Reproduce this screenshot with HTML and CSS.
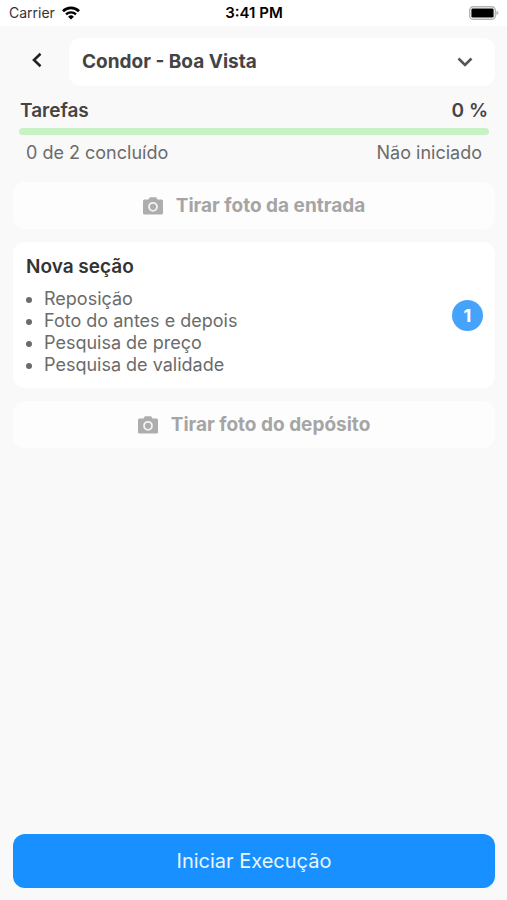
FILE: index.html
```html
<!DOCTYPE html>
<html lang="pt-BR">
<head>
  <meta charset="utf-8">
  <meta name="viewport" content="width=device-width, initial-scale=1">
  <title>Tarefas</title>
  <link rel="stylesheet" href="styles.css">
</head>
<body>
  <div class="status-bar">
    <div class="carrier">
      <span>Carrier</span>
      <svg class="wifi" viewBox="0 0 18 14" aria-hidden="true">
        <path d="M1 5.2a11.4 11.4 0 0 1 16 0" fill="none" stroke="currentColor" stroke-width="2.7"/>
        <path d="M4 8.4a7.2 7.2 0 0 1 10 0" fill="none" stroke="currentColor" stroke-width="2.3"/>
        <path d="M9 13.6 6.1 10.7a4.1 4.1 0 0 1 5.8 0z" fill="currentColor"/>
      </svg>
    </div>
    <time class="clock">3:41 PM</time>
    <svg class="battery" viewBox="0 0 30 14" aria-hidden="true">
      <rect x="0.7" y="0.7" width="25.6" height="12.6" rx="3.6" fill="#fff" stroke="#b4b4b4" stroke-width="1.4"/>
      <rect x="2.4" y="2.4" width="22.2" height="9.2" rx="1.4" fill="#000"/>
      <path d="M27.4 4.8c1.2.4 2 1.2 2 2.2s-.8 1.8-2 2.2z" fill="#b4b4b4"/>
    </svg>
  </div>

  <header class="top">
    <button class="back" type="button" aria-label="Voltar">
      <svg viewBox="0 0 10 16" aria-hidden="true"><path d="M8.5 1.8 2 8l6.5 6.2" fill="none" stroke="currentColor" stroke-width="2.6"/></svg>
    </button>
    <div class="store">
      <select class="store-select" aria-label="Loja">
        <option>Condor - Boa Vista</option>
      </select>
      <svg class="chevron" viewBox="0 0 16 10" aria-hidden="true"><path d="M1.5 1.5 8 8l6.5-6.5" fill="none" stroke="currentColor" stroke-width="2.6"/></svg>
    </div>
  </header>

  <main class="content">
    <section class="progress">
      <div class="progress-head">
        <h1>Tarefas</h1>
        <strong>0 %</strong>
      </div>
      <div class="track" role="progressbar" aria-label="Tarefas" aria-valuemin="0" aria-valuemax="100" aria-valuenow="0"></div>
      <div class="progress-foot">
        <span>0 de 2 concluído</span>
        <span>Não iniciado</span>
      </div>
    </section>

    <button class="photo" type="button">
      <svg class="camera" viewBox="0 0 20 18" aria-hidden="true">
        <path fill="currentColor" d="M1.5 2.5h4l.8-1.6q.3-.6 1-.6h5.4q.7 0 1 .6l.8 1.6h4q1.5 0 1.5 1.500V16q0 1.500-1.500 1.500h-17Q0 17.500 0 16V4q0-1.500 1.500-1.500z"/>
        <circle cx="10" cy="9.800" r="4" fill="none" stroke="#f4f4f4" stroke-width="1.800"/>
      </svg>
      <span>Tirar foto da entrada</span>
    </button>

    <section class="card">
      <div>
        <h2>Nova seção</h2>
        <ul class="tasks">
          <li>Reposição</li>
          <li>Foto do antes e depois</li>
          <li>Pesquisa de preço</li>
          <li>Pesquisa de validade</li>
        </ul>
      </div>
      <span class="badge">1</span>
    </section>

    <button class="photo" type="button">
      <svg class="camera" viewBox="0 0 20 18" aria-hidden="true">
        <path fill="currentColor" d="M1.5 2.5h4l.8-1.6q.3-.6 1-.6h5.4q.7 0 1 .6l.8 1.6h4q1.5 0 1.5 1.500V16q0 1.500-1.500 1.500h-17Q0 17.500 0 16V4q0-1.500 1.500-1.500z"/>
        <circle cx="10" cy="9.800" r="4" fill="none" stroke="#f4f4f4" stroke-width="1.800"/>
      </svg>
      <span>Tirar foto do depósito</span>
    </button>
  </main>

  <footer class="actions">
    <button class="start" type="button">Iniciar Execução</button>
  </footer>
</body>
</html>
```
FILE: styles.css
```css
* {
  box-sizing: border-box;
}

body {
  display: flex;
  flex-direction: column;
  min-height: 100vh;
  margin: 0;
  background: #f9f9f9;
  color: #6b6b6b;
  font-family: Inter, "Liberation Sans", sans-serif;
  font-size: 18px;
  line-height: 22px;
}

button,
select {
  margin: 0;
  padding: 0;
  border: 0;
  background: none;
  font: inherit;
}

svg {
  display: block;
  flex: none;
}

h1,
h2 {
  margin: 0;
  font-weight: 600;
}

.status-bar {
  display: grid;
  grid-template-columns: 1fr auto 1fr;
  align-items: center;
  height: 26px;
  padding: 0 8px 0 9px;
  background: #fff;
  color: #000;
  font-size: 14px;
}

.carrier {
  display: flex;
  align-items: center;
  gap: 7px;
  color: #333;
}

.wifi {
  width: 18px;
  height: 14px;
  color: #000;
}

.clock {
  font-size: 15px;
  font-weight: 600;
}

.battery {
  width: 30px;
  height: 14px;
  justify-self: end;
}

.top {
  display: flex;
  align-items: flex-start;
  padding: 12px 12px 0 13px;
}

.back {
  display: grid;
  place-items: center;
  width: 48px;
  height: 44px;
  margin-right: 8px;
  color: #222;
}

.back svg {
  width: 10px;
  height: 16px;
}

.store {
  display: grid;
  flex: 1;
  align-items: center;
  border-radius: 12px;
  background: #fff;
}

.store-select,
.chevron {
  grid-area: 1 / 1;
}

.store-select {
  width: 100%;
  height: 48px;
  padding: 0 48px 0 13px;
  border-radius: 12px;
  appearance: none;
  color: #444;
  font-size: 19px;
  font-weight: 700;
}

.chevron {
  justify-self: end;
  width: 16px;
  height: 10px;
  margin-right: 22px;
  color: #555;
  pointer-events: none;
}

.content {
  display: flex;
  flex: 1;
  flex-direction: column;
  gap: 13px;
  padding: 12px 12px 0 13px;
}

.progress {
  padding: 0 6px 5px;
}

.progress-head,
.progress-foot {
  display: flex;
  justify-content: space-between;
}

.progress-head {
  padding: 0 1px;
  color: #444;
}

.progress-head h1,
.progress-head strong {
  font-size: 19px;
  font-weight: 600;
  line-height: 25px;
}

.track {
  height: 7px;
  margin: 5px 0 7px;
  border-radius: 4px;
  background: #c8f2c3;
}

.progress-foot {
  padding: 0 7px;
}

.photo {
  display: flex;
  align-items: center;
  justify-content: center;
  gap: 13px;
  height: 47px;
  border-radius: 12px;
  background: #fdfdfd;
  color: #a5a5a5;
  font-size: 19px;
  font-weight: 700;
}

.camera {
  width: 20px;
  height: 18px;
  color: #adadad;
}

.card {
  display: flex;
  align-items: center;
  justify-content: space-between;
  padding: 13px 12px 12px 13px;
  border-radius: 12px;
  background: #fff;
}

.card h2 {
  margin-bottom: 9px;
  color: #333;
  font-size: 19px;
  line-height: 24px;
}

.tasks {
  margin: 0;
  padding-left: 18px;
}

.badge {
  display: grid;
  place-items: center;
  width: 31px;
  height: 31px;
  border-radius: 50%;
  background: #46a3fb;
  color: #fff;
  font-weight: 700;
}

.actions {
  padding: 12px 12px 12px 13px;
}

.start {
  width: 100%;
  height: 54px;
  border-radius: 12px;
  background: #1890ff;
  color: #e8f6ff;
  font-size: 20px;
}
```
